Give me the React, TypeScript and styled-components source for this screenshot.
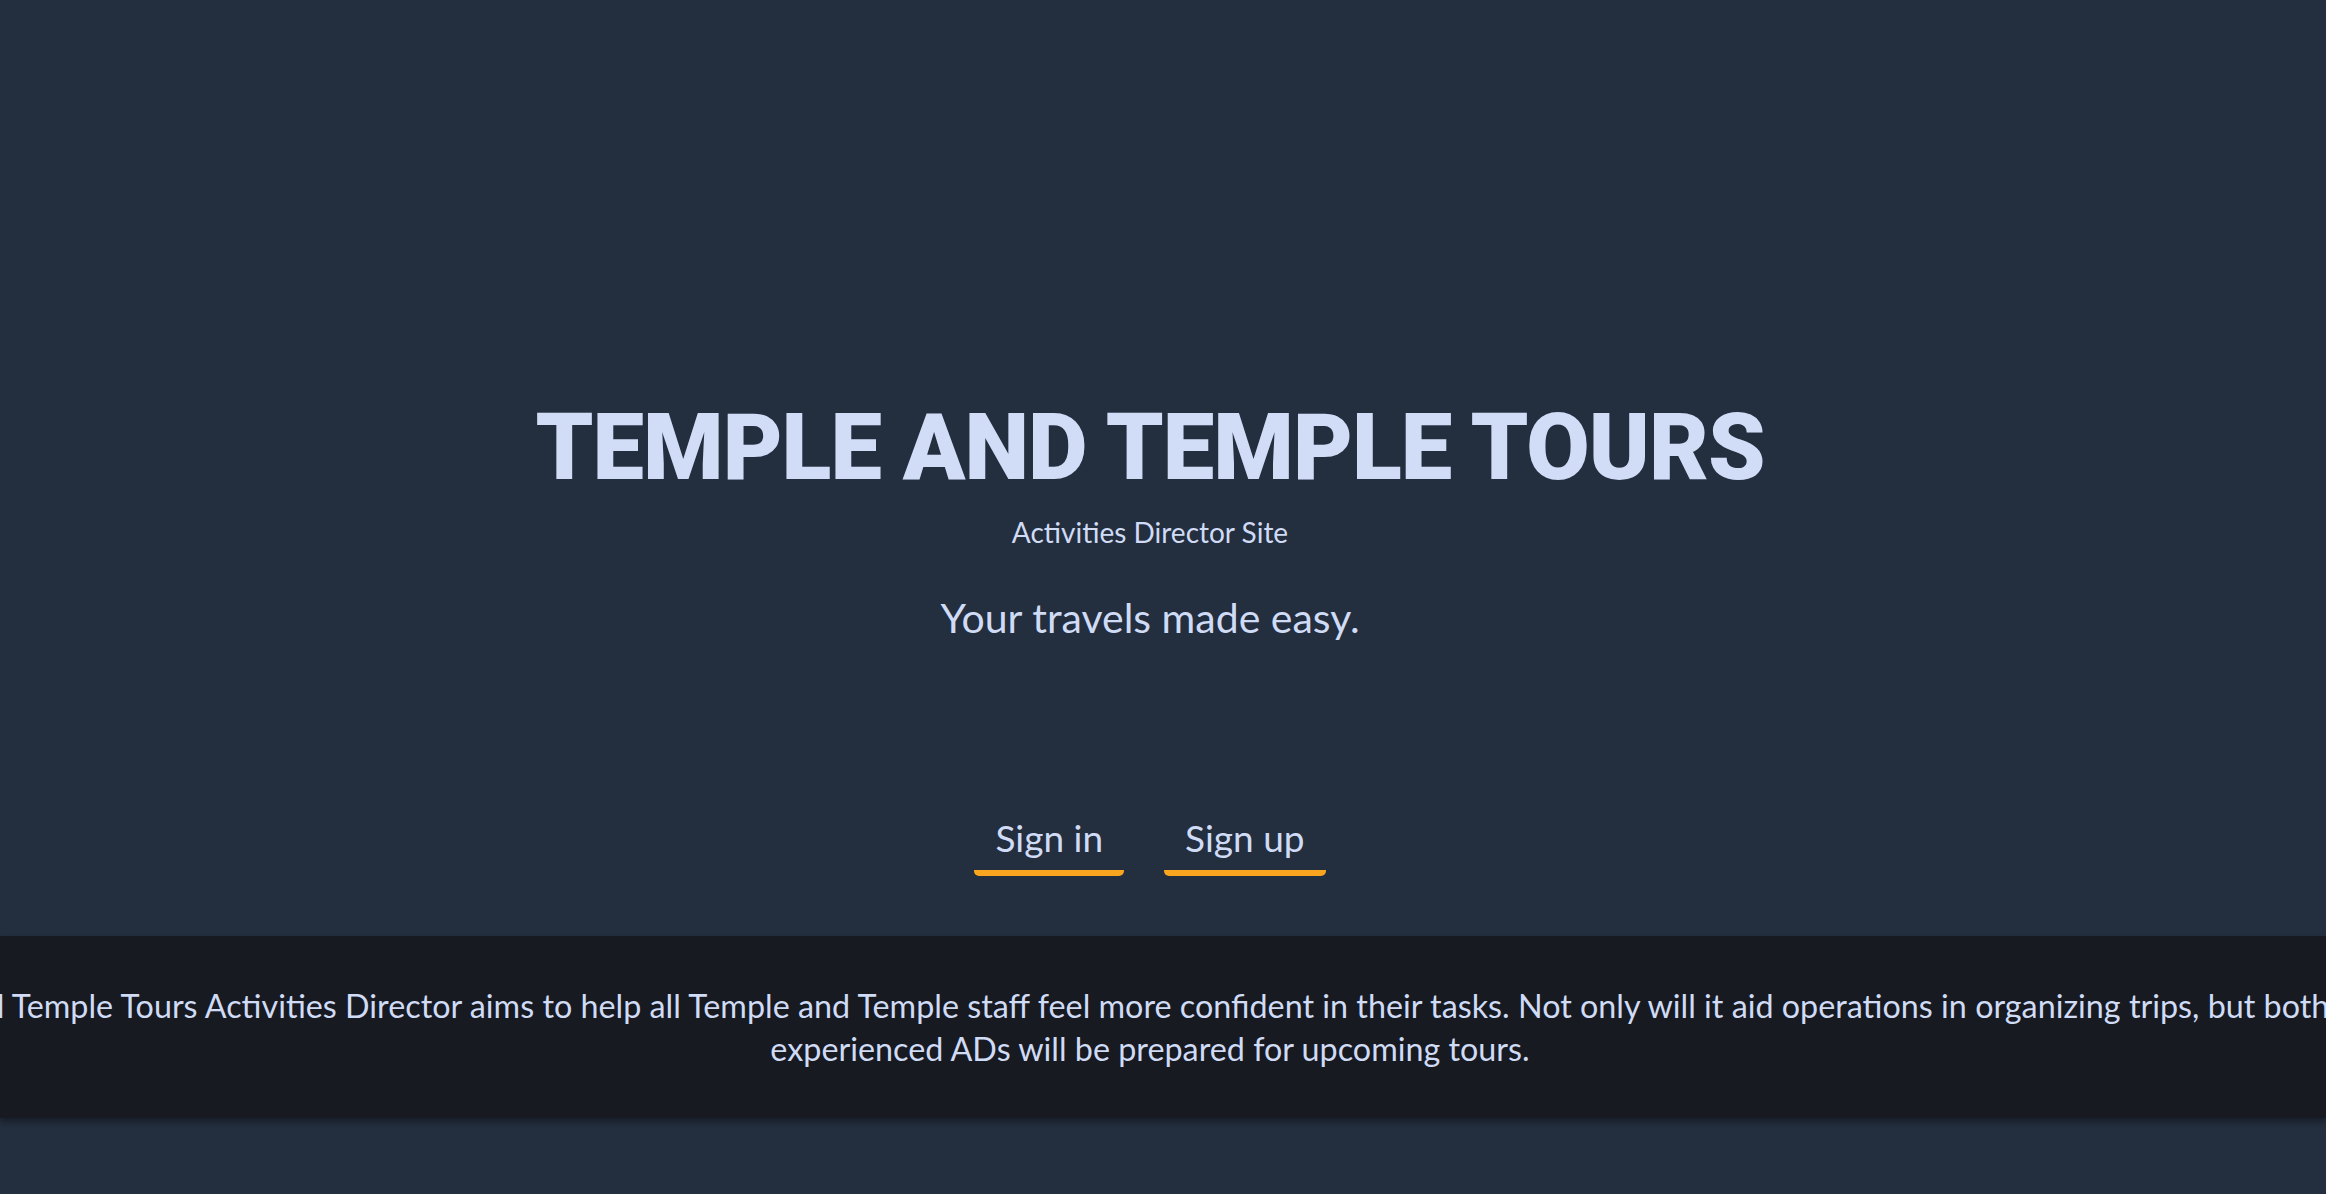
import React from "react";
import styled, { createGlobalStyle } from "styled-components";

const GlobalStyle = createGlobalStyle`
  html, body {
    margin: 0;
    padding: 0;
    background: #232e3e;
  }
  body {
    font-family: Lato, "Noto Sans", sans-serif;
    color: #d0dbf5;
    overflow: hidden;
  }
`;

const Page = styled.main`
  min-height: 100vh;
  display: flex;
  flex-direction: column;
  overflow: hidden;
`;

const Hero = styled.header`
  display: flex;
  flex-direction: column;
  align-items: center;
  padding: 402px 26px 0 0;
`;

const Title = styled.h1`
  margin: 0;
  font-family: Roboto, "Liberation Sans", sans-serif;
  font-weight: 900;
  font-size: 92px;
  line-height: 1;
  letter-spacing: -1px;
  color: #d1dcf7;
`;

const Subtitle = styled.p`
  margin: 22px 0 0;
  font-size: 28px;
  line-height: 1.2;
`;

const Tagline = styled.p`
  margin: 43px 0 0;
  font-size: 41px;
  line-height: 1.2;
`;

const Actions = styled.nav`
  display: flex;
  gap: 40px;
  margin: 164px 0 60px;
`;

const NavButton = styled.a`
  display: block;
  padding: 10px 21px 10px;
  font-size: 37px;
  line-height: 1.2;
  color: #d0dbf5;
  text-decoration: none;
  border-bottom: 6px solid #f9a51f;
  border-radius: 0 0 5px 5px;
  cursor: pointer;
`;

const Band = styled.section`
  display: flex;
  justify-content: center;
  padding: 48px 26px 48px 0;
  background: #171a21;
  box-shadow: 0 4px 6px rgba(0, 0, 0, 0.35);
  overflow: hidden;
`;

const About = styled.p`
  margin: 0;
  flex: none;
  font-size: 32.3px;
  line-height: 43px;
  text-align: center;
  white-space: nowrap;
`;

export default function App() {
  return (
    <>
      <GlobalStyle />
      <Page>
        <Hero>
          <Title>TEMPLE AND TEMPLE TOURS</Title>
          <Subtitle>Activities Director Site</Subtitle>
          <Tagline>Your travels made easy.</Tagline>
          <Actions>
            <NavButton>Sign in</NavButton>
            <NavButton>Sign up</NavButton>
          </Actions>
        </Hero>
        <Band>
          <About>
            Temple and Temple Tours Activities Director aims to help all Temple and Temple staff feel more confident in their tasks. Not only will it aid operations in organizing trips, but both new and
            <br />
            experienced ADs will be prepared for upcoming tours.
          </About>
        </Band>
      </Page>
    </>
  );
}
